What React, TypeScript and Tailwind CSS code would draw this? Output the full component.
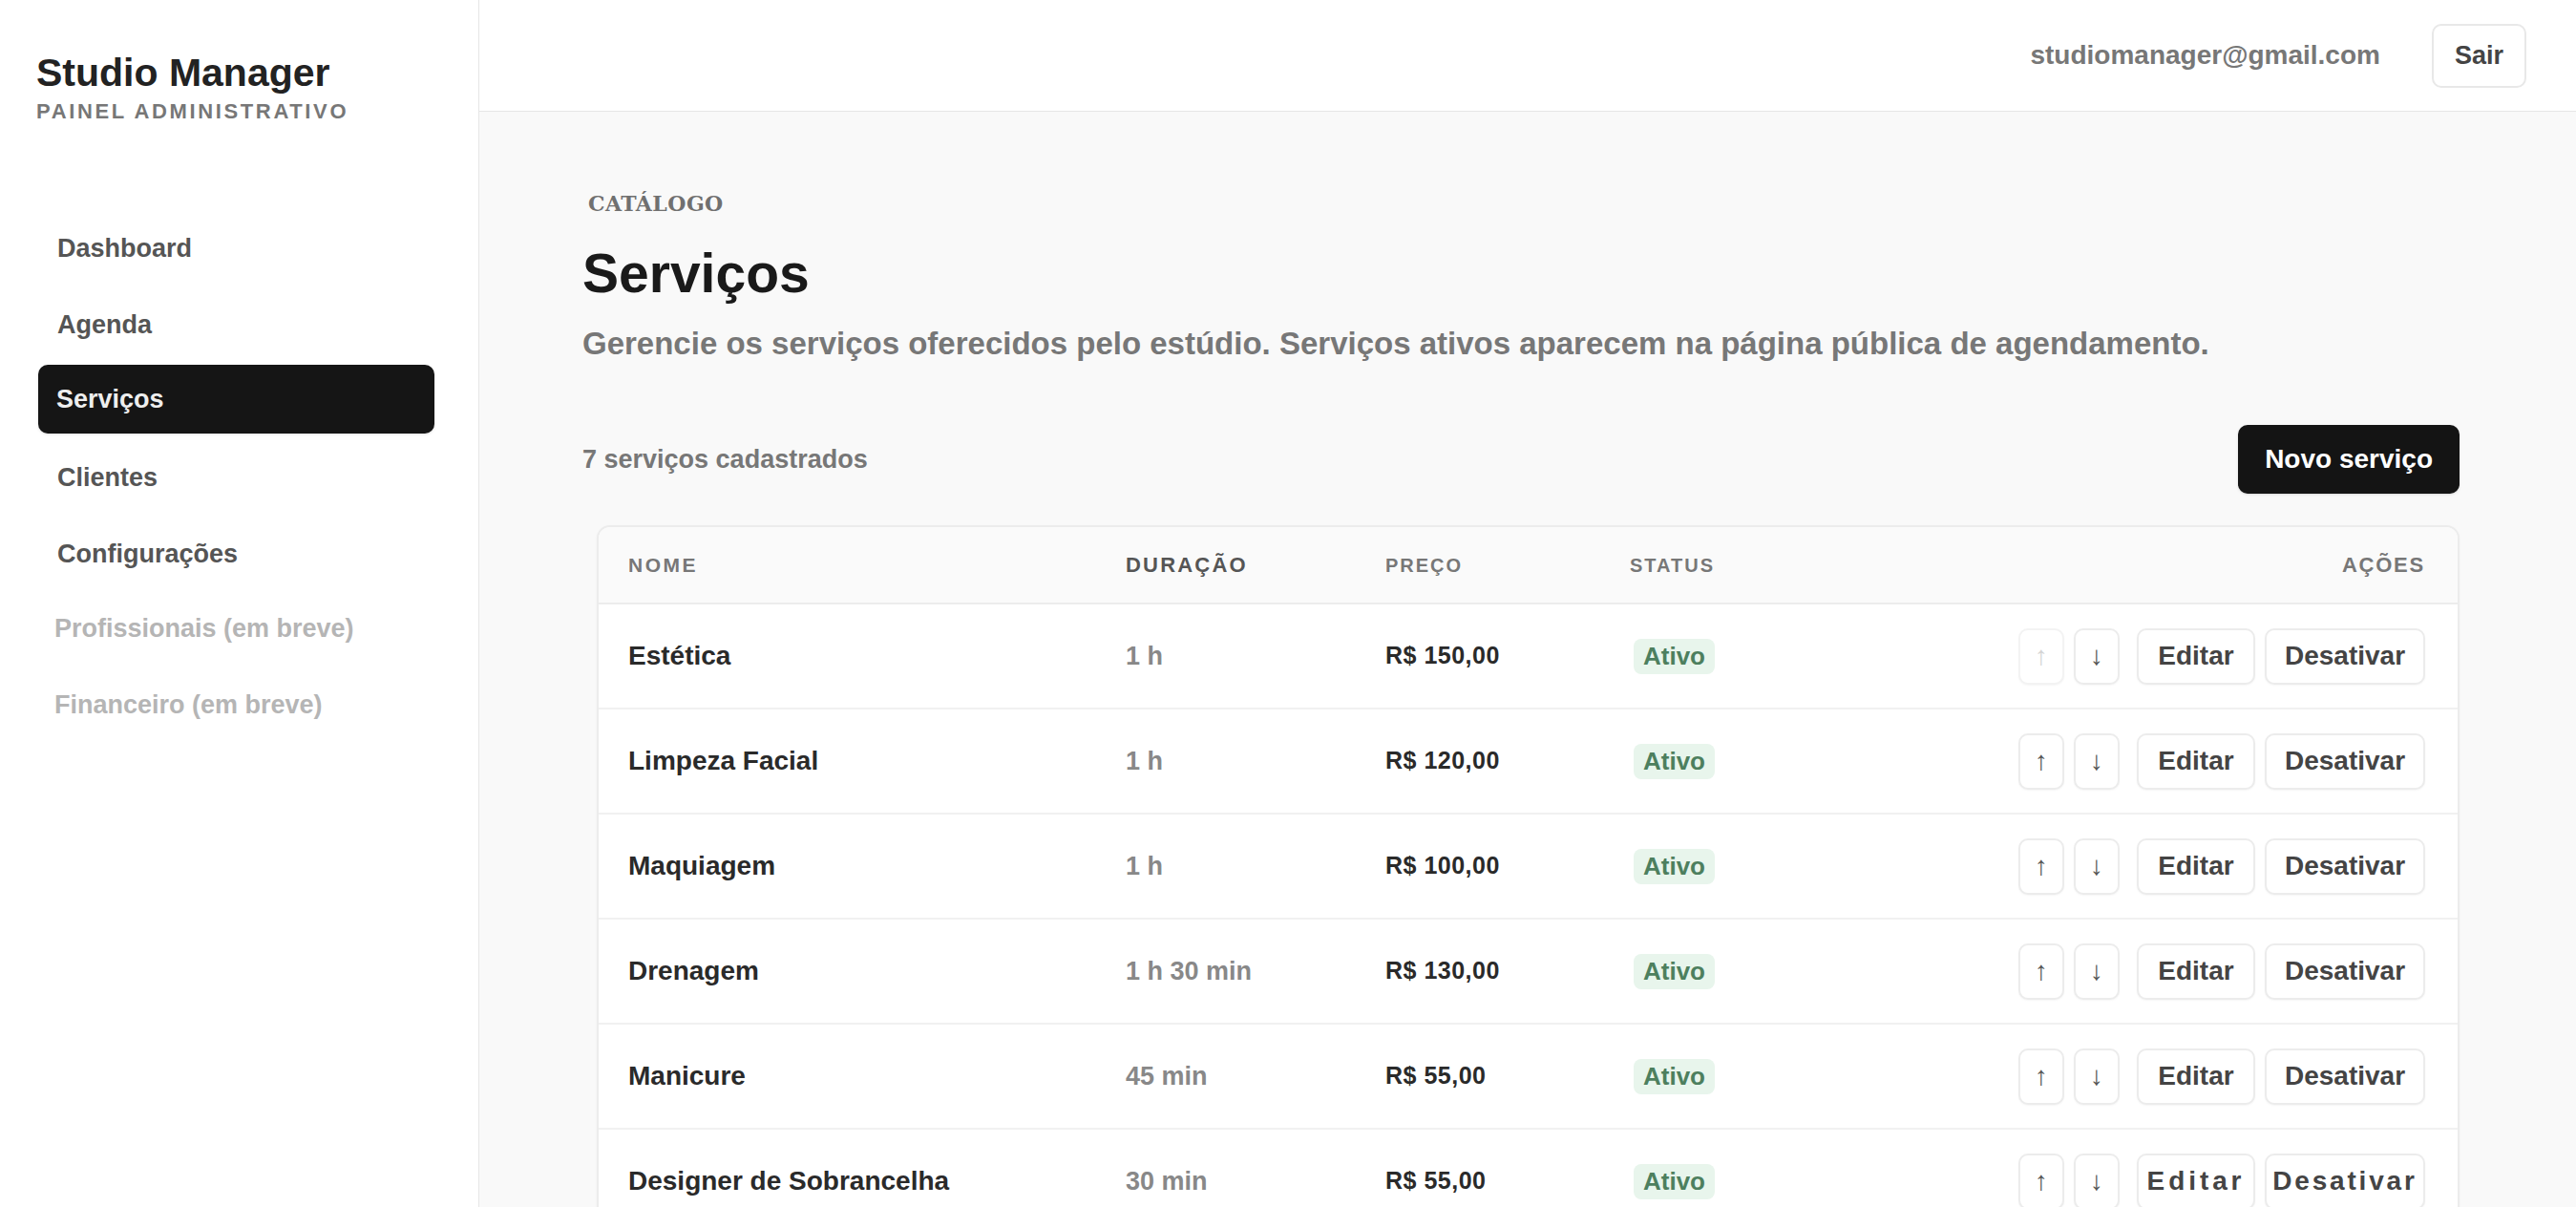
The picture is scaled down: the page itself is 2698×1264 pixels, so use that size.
const services = [
  { name: "Estética", duration: "1 h", price: "R$ 150,00" },
  { name: "Limpeza Facial", duration: "1 h", price: "R$ 120,00" },
  { name: "Maquiagem", duration: "1 h", price: "R$ 100,00" },
  { name: "Drenagem", duration: "1 h 30 min", price: "R$ 130,00" },
  { name: "Manicure", duration: "45 min", price: "R$ 55,00" },
  { name: "Designer de Sobrancelha", duration: "30 min", price: "R$ 55,00" },
  { name: "Pedicure", duration: "45 min", price: "R$ 50,00" },
];

const navItems = [
  { label: "Dashboard" },
  { label: "Agenda" },
  { label: "Serviços", active: true },
  { label: "Clientes" },
  { label: "Configurações" },
  { label: "Profissionais (em breve)", disabled: true },
  { label: "Financeiro (em breve)", disabled: true },
];

function Sidebar() {
  return (
    <aside className="w-[502px] shrink-0 border-r border-[#e6e6e6] bg-white pl-[38px] pr-[46px] pt-[52px]">
      <h1 className="text-[41px] font-bold leading-[49px] text-[#222]">Studio Manager</h1>
      <p className="mt-[2px] text-[22px] font-bold leading-[28px] tracking-[0.12em] text-[#777]">
        PAINEL ADMINISTRATIVO
      </p>
      <nav className="ml-[2px] mt-[91px] flex flex-col gap-2">
        {navItems.map((item) => (
          <a
            key={item.label}
            className={
              item.active
                ? "flex h-[72px] items-center rounded-[10px] bg-[#151515] pl-[19px] text-[27px] font-bold text-[#eeeeee] shadow-sm"
                : item.disabled
                  ? "flex h-[72px] items-center pl-[17px] text-[27px] font-bold text-[#b5b5b5]"
                  : "flex h-[72px] items-center pl-[20px] pt-[4px] text-[27px] font-bold text-[#555]"
            }
          >
            {item.label}
          </a>
        ))}
      </nav>
    </aside>
  );
}

function Header() {
  return (
    <header className="flex h-[117px] items-center justify-end gap-[54px] border-b border-[#e6e6e6] bg-white pr-[52px]">
      <span className="text-[28px] font-bold text-[#777]">studiomanager@gmail.com</span>
      <button className="h-[67px] rounded-[10px] border-2 border-[#e8e8e8] bg-white px-[22px] text-[27px] font-bold text-[#444]">
        Sair
      </button>
    </header>
  );
}

function ActionButton({ children, className }: { children: React.ReactNode; className: string }) {
  return (
    <button
      className={
        "flex h-[59px] items-center justify-center rounded-[10px] border-2 bg-white shadow-[0_1px_2px_rgba(0,0,0,0.04)] " +
        className
      }
    >
      {children}
    </button>
  );
}

function ServiceRow({ s, first, spaced }: { s: (typeof services)[number]; first: boolean; spaced: boolean }) {
  return (
    <div className="grid h-[110px] grid-cols-[521px_272px_256px_1fr_auto] items-center border-b-2 border-[#f1f1f1] bg-white pl-[31px] pr-[34px]">
      <span className="text-[28px] font-bold text-[#2a2a2a]">{s.name}</span>
      <span className="text-[27px] font-bold text-[#888]">{s.duration}</span>
      <span className="text-[25px] font-bold tracking-[0.02em] text-[#2a2a2a]">{s.price}</span>
      <span>
        <span className="ml-[4px] inline-flex h-[37px] items-center rounded-lg bg-[#e8f5ec] px-[10px] text-[26px] font-bold text-[#4d7f5e]">
          Ativo
        </span>
      </span>
      <div className="flex items-center">
        <ActionButton
          className={
            first
              ? "w-[48px] border-[#f3f3f3] text-[28px] text-[#d4d4d4]"
              : "w-[48px] border-[#ececec] text-[28px] text-[#555]"
          }
        >
          ↑
        </ActionButton>
        <ActionButton className="ml-[10px] w-[48px] border-[#ececec] text-[28px] text-[#555]">↓</ActionButton>
        <ActionButton
          className={
            "ml-[18px] w-[124px] border-[#ececec] text-[28px] font-bold text-[#444] " + (spaced ? "tracking-[0.14em]" : "")
          }
        >
          Editar
        </ActionButton>
        <ActionButton
          className={
            "ml-[10px] w-[168px] border-[#ececec] text-[28px] font-bold text-[#444] " + (spaced ? "tracking-[0.1em]" : "")
          }
        >
          Desativar
        </ActionButton>
      </div>
    </div>
  );
}

export default function App() {
  return (
    <div className="flex min-h-screen bg-[#f9f9f9] font-['Liberation_Sans',Arial,sans-serif]">
      <Sidebar />
      <div className="flex min-w-0 flex-1 flex-col">
        <Header />
        <main className="pb-20 pl-[108px] pr-[122px] pt-[80px]">
          <p className="ml-[6px] font-['DejaVu_Serif',Georgia,serif] text-[22px] font-bold leading-[32px] tracking-[0.02em] text-[#707070]">
            CATÁLOGO
          </p>
          <h2 className="mt-[24px] text-[57px] font-bold leading-[67px] text-[#1a1a1a]">Serviços</h2>
          <p className="mt-[19px] text-[33px] font-bold leading-[42px] text-[#777]">
            Gerencie os serviços oferecidos pelo estúdio. Serviços ativos aparecem na página pública de agendamento.
          </p>

          <div className="mt-[64px] flex items-center justify-between">
            <span className="text-[27px] font-bold text-[#777]">7 serviços cadastrados</span>
            <button className="h-[72px] rounded-[10px] bg-[#141414] px-[28px] text-[28px] font-bold text-white shadow-sm">
              Novo serviço
            </button>
          </div>

          <div className="ml-[15px] mt-[33px] overflow-hidden rounded-[14px] border-2 border-[#ececec] bg-white shadow-[0_1px_3px_rgba(0,0,0,0.04)]">
            <div className="grid h-[81px] grid-cols-[521px_272px_256px_1fr_auto] items-center border-b-2 border-[#ececec] bg-[#fafafa] pl-[31px] pr-[34px]">
              <span className="text-[21px] font-bold tracking-[0.12em] text-[#777]">NOME</span>
              <span className="text-[22px] font-bold tracking-[0.1em] text-[#555]">DURAÇÃO</span>
              <span className="text-[20px] font-bold tracking-[0.1em] text-[#777]">PREÇO</span>
              <span className="text-[20px] font-bold tracking-[0.1em] text-[#777]">STATUS</span>
              <span className="text-right text-[22px] font-bold tracking-[0.08em] text-[#777]">AÇÕES</span>
            </div>
            {services.map((s, i) => (
              <ServiceRow key={s.name} s={s} first={i === 0} spaced={i === 5} />
            ))}
          </div>
        </main>
      </div>
    </div>
  );
}
